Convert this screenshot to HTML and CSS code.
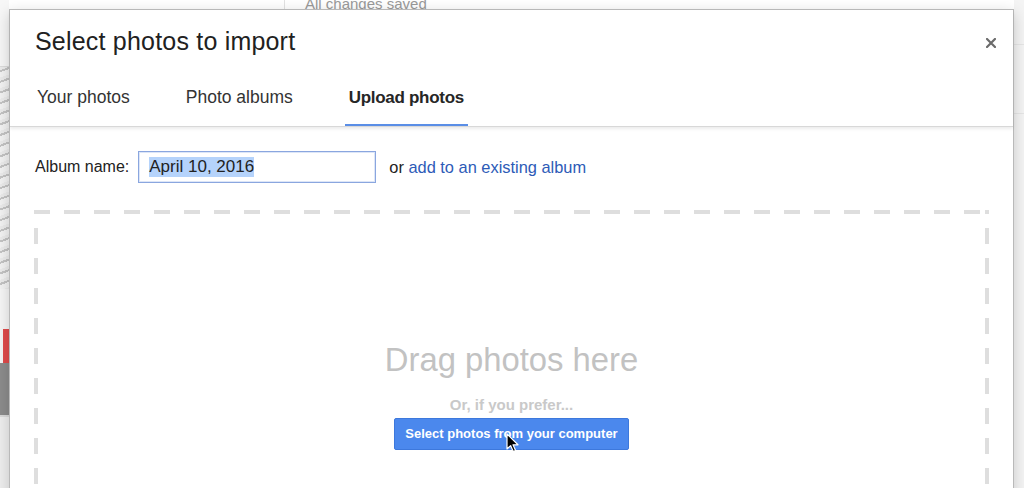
FILE: index.html
```html
<!DOCTYPE html>
<html>
<head>
<meta charset="utf-8">
<link rel="stylesheet" href="styles.css">
</head>
<body>
<div class="page">
  <div class="bg">
    <div class="bg-left">
      <div class="bl-top"></div>
      <div class="bl-sketch"></div>
      <div class="bl-white"></div>
      <div class="bl-red"></div>
      <div class="bl-gray"></div>
      <div class="bl-rest"></div>
    </div>
    <div class="bg-main">
      <div class="bg-topbar">
        <div class="bg-sep"></div>
        <div class="bg-status">All changes saved</div>
      </div>
    </div>
    <div class="bg-right">
      <div class="br-line"></div>
      <div class="br-line"></div>
    </div>
  </div>

  <div class="dialog">
    <div class="dlg-header">
      <div class="dlg-titlebar">
        <div class="dlg-title">Select photos to import</div>
        <svg class="dlg-close" width="10" height="10" viewBox="0 0 10 10"><path d="M1 1L9 9M9 1L1 9" stroke="#6b6b6b" stroke-width="2.2" stroke-linecap="square"/></svg>
      </div>
      <div class="tabs">
        <div class="tab">Your photos</div>
        <div class="tab">Photo albums</div>
        <div class="tab active">Upload photos</div>
      </div>
    </div>
    <div class="dlg-body">
      <div class="album-row">
        <span class="album-label">Album name:</span>
        <div class="album-input"><span class="sel">April 10, 2016</span></div>
        <span class="album-or">or <span class="link">add to an existing album</span></span>
      </div>
      <div class="dropzone">
        <div class="drop-title">Drag photos here</div>
        <div class="drop-sub">Or, if you prefer...</div>
        <div class="drop-btn">Select photos from your computer</div>
      </div>
    </div>
  </div>

  <svg class="cursor" width="14" height="21" viewBox="0 0 14 21"><path d="M1 1 L1 16 L4.6 12.6 L7.2 18.6 L9.6 17.6 L7 11.8 L12 11.8 Z" fill="#000" stroke="#fff" stroke-width="1.2" stroke-linejoin="round"/></svg>
</div>
</body>
</html>
```

FILE: styles.css
```css
html, body {
  margin: 0;
  padding: 0;
}
body {
  font-family: "Liberation Sans", Arial, sans-serif;
  background: #ffffff;
  overflow: hidden;
}
.page {
  position: relative;
  width: 1024px;
  height: 488px;
  overflow: hidden;
}

/* background page */
.bg {
  display: flex;
  height: 488px;
}
.bg-left {
  width: 9px;
  display: flex;
  flex-direction: column;
  background: #f4f4f4;
}
.bl-top { height: 66px; background: #f7f7f7; border-bottom: 1px solid #dcdcdc; }
.bl-sketch {
  height: 222px;
  background: repeating-linear-gradient(160deg, #ececec 0 3px, #c4c4c4 3px 5px, #f3f3f3 5px 10px);
}
.bl-white { height: 40px; background: #f6f6f6; }
.bl-red { height: 34px; background: linear-gradient(90deg, #f6f6f6 0 3px, #e04b4b 3px 9px); }
.bl-gray { height: 52px; background: #8c8c8c; }
.bl-rest { flex: 1; background: #eeeeee; border-top: 2px solid #d9d9d9; }

.bg-main {
  flex: 1;
  background: #fbfbfb;
}
.bg-topbar {
  display: flex;
  align-items: flex-start;
  height: 9px;
  overflow: hidden;
  background: #ffffff;
}
.bg-sep {
  width: 1px;
  height: 9px;
  background: #e2e2e2;
  margin-left: 275px;
}
.bg-status {
  margin-left: 20px;
  margin-top: -5px;
  font-size: 15px;
  color: #9a9a9a;
}
.bg-right {
  width: 10px;
  background: #f4f4f4;
  display: flex;
  flex-direction: column;
  gap: 68px;
  padding-top: 44px;
}
.br-line { height: 1px; background: #e6e6e6; }

/* dialog (overlay) */
.dialog {
  position: absolute;
  left: 9px;
  top: 9px;
  width: 1003px;
  height: 500px;
  background: #ffffff;
  border: 1px solid #b9b9b9;
  box-shadow: 0 4px 14px rgba(0, 0, 0, 0.18);
}
.dlg-header {
  border-bottom: 1px solid #d8d8d8;
  box-shadow: 0 2px 3px rgba(0, 0, 0, 0.08);
  position: relative;
}
.dlg-titlebar {
  display: flex;
  align-items: center;
  justify-content: space-between;
  padding: 17px 17px 0 25px;
}
.dlg-title {
  font-size: 25px;
  line-height: 29px;
  color: #212121;
  letter-spacing: 0.2px;
}
.dlg-close {
  display: block;
  margin-top: 2px;
}
.tabs {
  display: flex;
  gap: 48px;
  padding-left: 23px;
  margin-top: 31px;
}
.tab {
  font-size: 17.5px;
  line-height: 21px;
  color: #333333;
  padding: 0 4px 16px;
  border-bottom: 2px solid transparent;
}
.tab.active {
  font-size: 17px;
  font-weight: bold;
  letter-spacing: -0.3px;
  color: #262626;
  border-bottom-color: #5a8ee6;
}

.dlg-body {
  padding: 24px 24px 0;
}
.album-row {
  display: flex;
  align-items: center;
  padding-left: 1px;
}
.album-label {
  font-size: 16px;
  color: #222222;
}
.album-input {
  margin-left: 9px;
  width: 226px;
  height: 30px;
  border: 1px solid #8aa6df;
  box-shadow: inset 0 0 0 1px rgba(120, 155, 225, 0.25);
  padding-left: 10px;
  display: flex;
  align-items: center;
  font-size: 17px;
  color: #222222;
}
.sel {
  background: #b5d3fb;
  line-height: 20px;
}
.album-or {
  margin-left: 13px;
  font-size: 16.4px;
  color: #222222;
}
.link {
  color: #2d5bb7;
}

.dropzone {
  margin-top: 27px;
  height: 300px;
  padding-top: 131px;
  box-sizing: border-box;
  display: flex;
  flex-direction: column;
  align-items: center;
  background:
    repeating-linear-gradient(to right, #dedede 0 16px, transparent 16px 30px) top left / 100% 4px no-repeat,
    repeating-linear-gradient(to bottom, #dedede 0 4px, transparent 4px 18px, #dedede 18px 30px) top left / 4px 100% no-repeat,
    repeating-linear-gradient(to bottom, #dedede 0 4px, transparent 4px 18px, #dedede 18px 30px) top right / 4px 100% no-repeat;
}
.drop-title {
  font-size: 32.8px;
  line-height: 38px;
  color: #c2c2c2;
}
.drop-sub {
  margin-top: 17px;
  font-size: 15px;
  line-height: 17px;
  font-weight: bold;
  color: #c9c9c9;
}
.drop-btn {
  margin-top: 5px;
  background: #4b88ed;
  border: 1px solid #3d78dc;
  border-radius: 2px;
  color: #ffffff;
  font-size: 13px;
  font-weight: bold;
  line-height: 30px;
  padding: 0 10px;
}

.cursor {
  position: absolute;
  left: 506px;
  top: 433px;
}
```
